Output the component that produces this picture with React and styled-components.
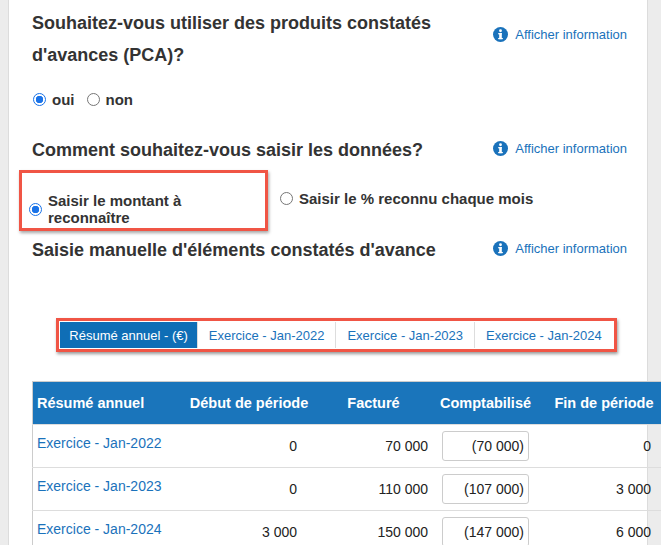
import React from "react";
import styled, { createGlobalStyle } from "styled-components";

const G = createGlobalStyle`
  html,body{margin:0;padding:0;background:#ececec;}
  body{font-family:"Liberation Sans",Arial,sans-serif;color:#333;}
`;
const Page = styled.div`
  margin-left:8px;width:640px;background:#fff;min-height:545px;
  border-left:1px solid #dcdcdc;border-right:1px solid #dcdcdc;
  padding:7px 0 0 23px;box-sizing:border-box;
`;
const Section = styled.div`display:flex;justify-content:space-between;align-items:flex-start;padding-right:20px;`;
const H = styled.h2`
  margin:0;font-size:18px;font-weight:bold;line-height:${p=>p.lh||32}px;color:#333;width:${p=>p.w||"auto"};
`;
const Info = styled.a`
  display:flex;align-items:center;gap:7px;color:#1a72bb;font-size:13px;white-space:nowrap;
  margin-top:${p=>p.mt||0}px;
`;
const Icon = () => (
  <svg width="15" height="15" viewBox="0 0 16 16"><circle cx="8" cy="8" r="8" fill="#1a72bb"/><rect x="6.6" y="6.5" width="2.8" height="6.5" fill="#fff"/><rect x="5.5" y="6.5" width="4" height="1.3" fill="#fff"/><rect x="5.5" y="11.7" width="5" height="1.3" fill="#fff"/><circle cx="8" cy="4" r="1.5" fill="#fff"/></svg>
);
const Radios = styled.div`display:flex;align-items:center;gap:${p=>p.gap||12}px;margin:${p=>p.m||0};`;
const Label = styled.label`display:flex;align-items:center;gap:6px;font-size:15px;font-weight:bold;color:#333;`;
const Radio = styled.span`
  width:13px;height:13px;border-radius:50%;box-sizing:border-box;flex:none;
  border:1px solid ${p=>p.on?"#1a73e8":"#767676"};
  background:${p=>p.on?"radial-gradient(circle,#1a73e8 0 3.5px,#fff 4px)":"#fff"};
`;
const RedBox = styled.div`
  border:3px solid #f05545;box-shadow:1px 2px 3px rgba(0,0,0,.35);
  margin-left:-13px;padding:19px 0 0 7px;width:249px;height:61px;box-sizing:border-box;
`;
const TabsWrap = styled.div`display:flex;justify-content:center;margin:51px 0 0 -23px;width:640px;padding-left:15px;box-sizing:border-box;`;
const Tabs = styled.div`
  display:flex;border:3px solid #f05545;box-shadow:1px 2px 3px rgba(0,0,0,.4);padding:1px;
`;
const Tab = styled.div`
  height:26px;display:flex;align-items:center;padding:0 ${p=>p.px}px;font-size:13px;
  background:${p=>p.on?"#0f6eb6":"#fff"};color:${p=>p.on?"#fff":"#1a72bb"};
  border-left:${p=>p.first?"none":"1px solid #ddd"};
`;
const Table = styled.table`
  margin-top:29px;width:594px;border-collapse:collapse;border:1px solid #ccc;font-size:14px;table-layout:fixed;
`;
const Th = styled.th`
  background:#1a75bb;color:#fff;font-weight:bold;font-size:14.5px;height:42px;
  text-align:${p=>p.left?"left":"center"};padding:0 4px;white-space:nowrap;width:${p=>p.w}px;
`;
const Td = styled.td`
  height:${p=>p.link?36:42}px;border-top:1px solid #ddd;padding:0 ${p=>p.pr||4}px ${p=>p.link?6:0}px 4px;
  text-align:${p=>p.left?"left":"right"};color:${p=>p.link?"#1a72bb":"#222"};white-space:nowrap;
`;
const Input = styled.div`
  width:87px;height:30px;border:1px solid #ccc;border-radius:3px;box-sizing:border-box;
  display:flex;align-items:center;justify-content:flex-end;padding-right:4px;margin-left:8px;
`;
const rows=[["Exercice - Jan-2022","0","70 000","(70 000)","0"],["Exercice - Jan-2023","0","110 000","(107 000)","3 000"],["Exercice - Jan-2024","3 000","150 000","(147 000)","6 000"]];

export default function App(){
  return <><G/><Page>
    <Section><H w="440px">Souhaitez-vous utiliser des produits constatés d'avances (PCA)?</H><Info mt={20}><Icon/>Afficher information</Info></Section>
    <Radios m="20px 0 0 1px"><Label><Radio on/>oui</Label><Label><Radio/>non</Label></Radios>
    <Section style={{marginTop:22}}><H lh={40}>Comment souhaitez-vous saisir les données?</H><Info mt={11}><Icon/>Afficher information</Info></Section>
    <Radios gap={12}><RedBox><Label><Radio on/>Saisir le montant à reconnaître</Label></RedBox><Label style={{marginTop:-4}}><Radio/>Saisir le % reconnu chaque mois</Label></Radios>
    <Section style={{marginTop:2}}><H lh={34}>Saisie manuelle d'éléments constatés d'avance</H><Info mt={8}><Icon/>Afficher information</Info></Section>
    <TabsWrap><Tabs><Tab on first px={9}>Résumé annuel - (€)</Tab><Tab px={11}>Exercice - Jan-2022</Tab><Tab px={11}>Exercice - Jan-2023</Tab><Tab px={11}>Exercice - Jan-2024</Tab></Tabs></TabsWrap>
    <Table><thead><tr><Th left w={140}>Résumé annuel</Th><Th w={128}>Début de période</Th><Th w={105}>Facturé</Th><Th w={103}>Comptabilisé</Th><Th w={118}>Fin de période</Th></tr></thead>
    <tbody>{rows.map(r=><tr key={r[0]}><Td left link>{r[0]}</Td><Td pr={20}>{r[1]}</Td><Td pr={2}>{r[2]}</Td><Td><Input>{r[3]}</Input></Td><Td pr={16}>{r[4]}</Td></tr>)}</tbody></Table>
  </Page></>;
}
